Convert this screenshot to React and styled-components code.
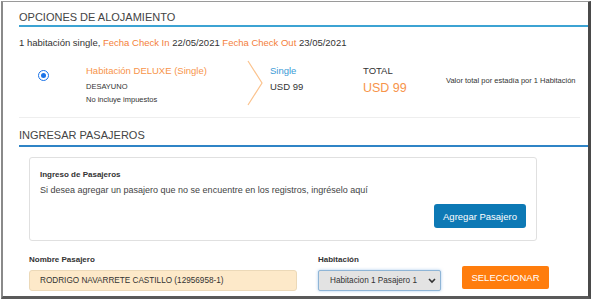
import styled, { createGlobalStyle } from 'styled-components'

const Global = createGlobalStyle`
  html, body { margin: 0; padding: 0; background: #fff; }
  body { font-family: "Liberation Sans", Arial, sans-serif; color: #444; }
`

const Frame = styled.div`
  width: 590px;
  height: 298px;
  margin: 1px 0 0 1px;
  box-sizing: border-box;
  border-left: 2px solid #8a8a8a;
  border-top: 1px solid #9a9a9a;
  border-right: 3px solid #4a4a4a;
  border-bottom: 3px solid #5a5a5a;
  overflow: hidden;
  padding-left: 16px;
`

const SectionTitle = styled.div`
  font-size: 11px;
  line-height: 13px;
  color: #444;
  padding: ${p => p.$top}px 0 ${p => p.$bottom}px 0;
  border-bottom: 2px solid ${p => p.$line};
`

const Summary = styled.div`
  font-size: 9.5px;
  line-height: 11px;
  color: #333;
  padding-top: 10px;
  span { color: #f4803a; }
`

const Offer = styled.div`
  display: flex;
  align-items: flex-start;
  height: 61px;
  margin-top: 8px;
  margin-right: 8px;
  border-bottom: 1px solid #eee;
`

const Radio = styled.span`
  width: 9px;
  height: 9px;
  margin: 14px 0 0 19px;
  border-radius: 50%;
  border: 1px solid #1a73e8;
  box-sizing: content-box;
  display: flex;
  align-items: center;
  justify-content: center;
  &::after {
    content: '';
    width: 5px;
    height: 5px;
    border-radius: 50%;
    background: #1a73e8;
  }
`

const RoomCol = styled.div`
  margin-left: 37px;
  width: 160px;
  padding-top: 9px;
`

const RoomName = styled.div`
  font-size: 9.5px;
  line-height: 11.5px;
  color: #f7944a;
`

const Small = styled.div`
  font-size: 7.5px;
  line-height: 9px;
  color: #333;
  margin-top: ${p => p.$mt || 0}px;
`

const Chevron = styled.svg`
  width: 18px;
  height: 46px;
  flex: none;
  margin-top: 4px;
`

const PriceCol = styled.div`
  padding-top: 9px;
  margin-left: ${p => p.$ml}px;
  width: ${p => p.$w}px;
`

const PriceName = styled.div`
  font-size: 9.5px;
  line-height: 11px;
  color: ${p => p.$color};
`

const PriceVal = styled.div`
  font-size: ${p => p.$size}px;
  line-height: ${p => p.$size + 2}px;
  color: ${p => p.$color};
  margin-top: ${p => p.$mt}px;
`

const Note = styled.div`
  font-size: 7.5px;
  line-height: 9px;
  color: #333;
  padding-top: 20px;
  white-space: nowrap;
`

const Card = styled.div`
  margin: 10px 0 0 10px;
  width: 508px;
  height: 84px;
  box-sizing: border-box;
  border: 1px solid #e0e0e0;
  border-radius: 3px;
  padding: 12px 10px 0 10px;
  display: flex;
  flex-direction: column;
`

const CardTitle = styled.div`
  font-size: 8px;
  line-height: 9px;
  font-weight: bold;
  color: #333;
`

const CardText = styled.div`
  font-size: 9px;
  line-height: 11px;
  color: #444;
  margin-top: 6px;
`

const BlueButton = styled.button`
  align-self: flex-end;
  margin-top: 8px;
  width: 92px;
  height: 24px;
  border: none;
  border-radius: 3px;
  background: #0d79b5;
  color: #fff;
  font-family: inherit;
  font-size: 9.5px;
  padding: 0;
`

const FormRow = styled.div`
  display: flex;
  align-items: flex-end;
  margin: 14px 0 0 10px;
`

const Field = styled.div`
  display: flex;
  flex-direction: column;
  margin-right: ${p => p.$mr}px;
`

const Label = styled.label`
  font-size: 8px;
  line-height: 9px;
  font-weight: bold;
  color: #333;
  margin-bottom: 6px;
`

const TextInput = styled.div`
  width: 268px;
  height: 21px;
  box-sizing: border-box;
  background: #fde9c9;
  border: 1px solid #ecd9b8;
  border-radius: 3px;
  font-size: 8.2px;
  color: #333;
  display: flex;
  align-items: center;
  padding-left: 10px;
`

const Select = styled.div`
  width: 123px;
  height: 21px;
  box-sizing: border-box;
  background: #e3e3e3;
  border: 1px solid #8fb5d6;
  box-shadow: 0 0 3px rgba(80, 150, 220, 0.5);
  border-radius: 2px;
  font-size: 8.2px;
  color: #333;
  display: flex;
  align-items: center;
  justify-content: space-between;
  padding: 0 4px 0 11px;
`

const OrangeButton = styled.button`
  width: 87px;
  height: 23px;
  margin-bottom: 2px;
  border: none;
  border-radius: 2px;
  background: #ff7d0d;
  color: #fff;
  font-family: inherit;
  font-size: 9.5px;
  padding: 0;
`

export default function App() {
  return (
    <>
      <Global />
      <Frame>
        <SectionTitle $top={9} $bottom={1} $line="#3ca3d3">OPCIONES DE ALOJAMIENTO</SectionTitle>
        <Summary>
          1 habitación single, <span>Fecha Check In</span> 22/05/2021 <span>Fecha Check Out</span> 23/05/2021
        </Summary>
        <Offer>
          <Radio />
          <RoomCol>
            <RoomName>Habitación DELUXE (Single)</RoomName>
            <Small $mt={5}>DESAYUNO</Small>
            <Small $mt={4}>No incluye impuestos</Small>
          </RoomCol>
          <Chevron viewBox="0 0 18 46">
            <polyline points="2,1 16,23 2,45" fill="none" stroke="#fbc38e" strokeWidth="1.2" />
          </Chevron>
          <PriceCol $ml={6} $w={93}>
            <PriceName $color="#3a9ad6">Single</PriceName>
            <PriceVal $size={9.5} $color="#333" $mt={5}>USD 99</PriceVal>
          </PriceCol>
          <PriceCol $ml={0} $w={83}>
            <PriceName $color="#333">TOTAL</PriceName>
            <PriceVal $size={12.5} $color="#f7944a" $mt={5}>USD 99</PriceVal>
          </PriceCol>
          <Note>Valor total por estadía por 1 Habitación</Note>
        </Offer>
        <SectionTitle $top={11} $bottom={3} $line="#2f84c6">INGRESAR PASAJEROS</SectionTitle>
        <Card>
          <CardTitle>Ingreso de Pasajeros</CardTitle>
          <CardText>Si desea agregar un pasajero que no se encuentre en los registros, ingréselo aquí</CardText>
          <BlueButton>Agregar Pasajero</BlueButton>
        </Card>
        <FormRow>
          <Field $mr={21}>
            <Label>Nombre Pasajero</Label>
            <TextInput>RODRIGO NAVARRETE CASTILLO (12956958-1)</TextInput>
          </Field>
          <Field $mr={21}>
            <Label>Habitación</Label>
            <Select>
              Habitacion 1 Pasajero 1
              <svg width="8" height="6" viewBox="0 0 8 6">
                <polyline points="1,1 4,4 7,1" fill="none" stroke="#333" strokeWidth="1.6" />
              </svg>
            </Select>
          </Field>
          <OrangeButton>SELECCIONAR</OrangeButton>
        </FormRow>
      </Frame>
    </>
  )
}
